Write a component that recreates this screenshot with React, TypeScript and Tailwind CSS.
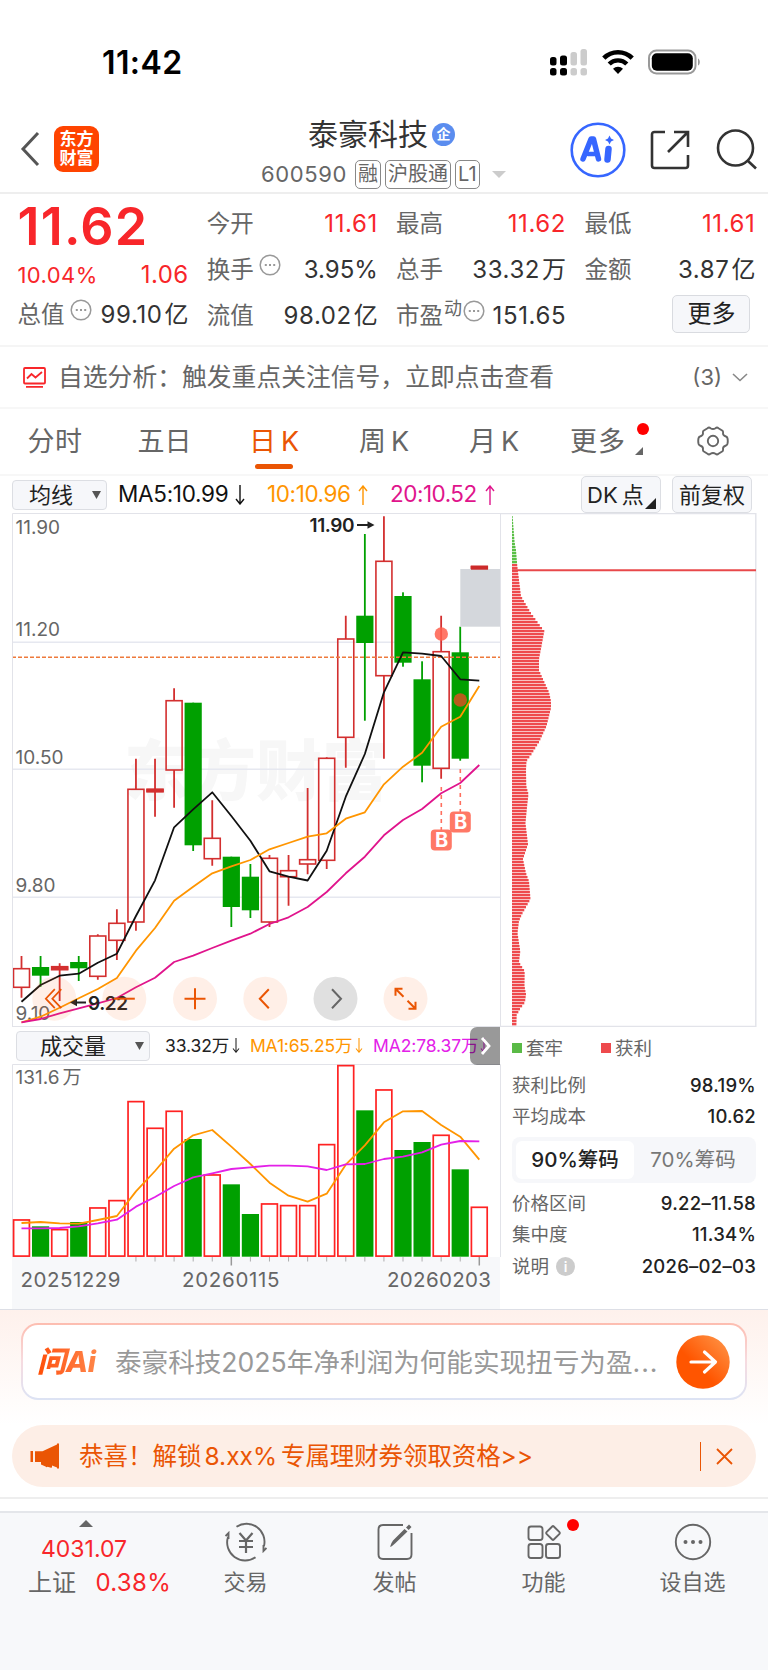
import type { ReactNode } from 'react'

type Candle = [top: number, bottom: number, high: number, low: number, up: 0 | 1]

// body top, body bottom, high, low, rising
const candles: Candle[] = [
  [968.7, 987.3, 956, 997.7, 1],
  [967, 975.7, 956, 986.7, 0],
  [966.7, 969.7, 963.3, 1001, 1],
  [962, 968.3, 956, 981, 0],
  [936, 976.3, 934.3, 979.7, 1],
  [923.3, 940.3, 909.3, 960, 1],
  [789.3, 922, 758.7, 930.7, 1],
  [789.3, 791.7, 758.7, 816.7, 1],
  [700.7, 770, 688.3, 807.7, 1],
  [702.7, 845.3, 702.7, 851, 0],
  [838.3, 858.7, 800.3, 865.7, 1],
  [856.7, 907, 856.7, 927, 0],
  [876.7, 910.3, 864, 918, 0],
  [858.3, 922, 855, 927, 1],
  [870.7, 876.7, 855, 905.7, 1],
  [859.7, 864, 788, 874.3, 1],
  [758.3, 860.3, 757.3, 869, 1],
  [639, 737.3, 615.7, 767.7, 1],
  [615.7, 643, 534, 720.7, 0],
  [561.3, 675.7, 516.3, 758.7, 1],
  [596, 662.7, 592.3, 666.7, 0],
  [679.3, 765.7, 661.3, 782.3, 0],
  [651.7, 768.3, 615.7, 778.7, 1],
  [652.3, 758.7, 626.7, 760.7, 0],
  [566.5, 569, 566.5, 569, 1],
]

const ma5 = [1001.7, 985, 975.7, 973.7, 962.7, 953.7, 916, 880.3, 827.3, 809.3, 792.3, 816, 840.7, 871.3, 876.7, 880.5, 850.7, 796.7, 754, 692.3, 652.3, 653.7, 656, 679.3, 680.7]
const ma10 = [1022.3, 1016.7, 1007.7, 998.3, 989, 978, 950.7, 928, 900.7, 886.7, 873.3, 866.3, 860, 849.3, 843, 836.7, 833.3, 818.7, 812.3, 784.3, 766.7, 752.7, 726.7, 716.7, 686]
const ma20 = [1022.3, 1019, 1013.3, 1008.3, 1003.3, 998, 987.3, 977.7, 962, 955.7, 948, 940.7, 933.7, 924, 917.3, 907, 892, 873.3, 856.7, 835.3, 820, 809, 793.3, 783, 765]

const volumes = [599, 619, 628, 606, 563, 541, 244, 324, 273, 357, 464, 493, 582, 551, 556, 556, 373, 136, 271, 209, 390, 366, 345, 448, 561]
const volMa1 = [609, 606, 610, 611, 600, 588, 514, 453, 386, 346, 330, 380, 432, 488, 527, 545, 521, 434, 376, 307, 274, 273, 315, 350, 419]
const volMa2 = [625, 625, 624, 619, 610, 599, 560, 531, 498, 472, 460, 447, 442, 437, 437, 439, 450, 433, 432, 417, 410, 397, 374, 363, 364]

// chip distribution outline: y, width
const chips: [number, number][] = [
  [516, 0.7], [541, 2.6], [549, 4], [565, 5.3], [595, 9], [612, 19], [623, 27], [630, 32.3], [645, 29.5], [658, 27],
  [669, 27], [678, 31], [691, 37], [700, 39], [707, 39], [725, 34.5], [741, 27], [753, 19.5], [760, 14.5], [769, 14],
  [785, 14.3], [793, 16.5], [806, 15], [822, 13.5], [843, 16], [858, 11], [872, 14], [880, 17], [898, 18.5], [906, 14],
  [913, 10], [920, 7], [932, 5.5], [950, 8.3], [961, 7], [970, 12.7], [985, 12.5], [993, 14], [1001, 13], [1008, 8],
  [1014, 4.7], [1027, 4.3],
]

const cx = (i: number) => 21.5 + i * 19.075
const line = (ys: number[]) => ys.map((y, i) => `${cx(i)},${y}`).join(' ')
const volLine = (ys: number[]) => line(ys.map((y) => 1020 + y / 3))

function chipWidth(y: number) {
  for (let i = 1; i < chips.length; i++) {
    const [y0, w0] = chips[i - 1]
    const [y1, w1] = chips[i]
    if (y <= y1) return w0 + ((w1 - w0) * (y - y0)) / (y1 - y0)
  }
  return 4
}

function Arrow({ up, className }: { up?: boolean; className?: string }) {
  return (
    <svg viewBox="0 0 10 20" className={className} fill="none" stroke="currentColor" strokeWidth="1.4">
      {up ? <path d="M5 20V1M1 6l4-5 4 5" /> : <path d="M5 0v19M1 14l4 5 4-5" />}
    </svg>
  )
}

function Dots({ className }: { className?: string }) {
  return (
    <svg viewBox="0 0 22 22" className={className} fill="none" stroke="#999" strokeWidth="1.5">
      <circle cx="11" cy="11" r="9.8" />
      <path d="M5.8 11h2M10 11h2M14.2 11h2" strokeWidth="2" />
    </svg>
  )
}

function StatusBar() {
  return (
    <div className="flex h-[112px] items-start justify-between pl-[102px] pr-[67px] pt-[46px]">
      <span className="text-[32px] font-semibold leading-[33px] tracking-[0.4px] text-black">11:42</span>
      <div className="flex pt-[3px]">
        <svg className="mr-[15px] h-[28px] w-[37px]" viewBox="0 0 37 28">
          <g fill="#000">
            <rect x="0" y="8" width="6.5" height="8.5" rx="2.5" />
            <rect x="10" y="6.5" width="7" height="10" rx="2.5" />
            <rect x="0" y="19" width="6.5" height="7.5" rx="2.5" />
            <rect x="10" y="19" width="7" height="7.5" rx="2.5" />
          </g>
          <g fill="#ccc">
            <rect x="20.5" y="3" width="6.5" height="13.5" rx="2.5" />
            <rect x="30.5" y="0" width="6.5" height="16.5" rx="2.5" />
            <rect x="20.5" y="19" width="6.5" height="7.5" rx="2.5" />
            <rect x="30.5" y="19" width="6.5" height="7.5" rx="2.5" />
          </g>
        </svg>
        <svg className="mr-[14px] h-[26px] w-[32px]" viewBox="0 0 32 26" fill="none" stroke="#000" strokeWidth="4.6">
          <path d="M1.8 9.2a20 20 0 0 1 28.4 0" />
          <path d="M7.2 15a12.4 12.4 0 0 1 17.6 0" strokeWidth="4.4" />
          <path d="M16 25l-5-5.2a7 7 0 0 1 10 0z" fill="#000" stroke="none" />
        </svg>
        <svg className="h-[26px] w-[53px]" viewBox="0 0 53 26">
          <rect x="1" y="1.5" width="46.5" height="23" rx="7.5" fill="none" stroke="#999" strokeWidth="2" />
          <rect x="3.8" y="4.3" width="41" height="17.5" rx="5" fill="#000" />
          <path d="M50 9.5c2.4 1 2.4 6 0 7z" fill="#999" />
        </svg>
      </div>
    </div>
  )
}

function Tag({ children }: { children: ReactNode }) {
  return (
    <span className="flex h-[29px] items-center rounded-[5px] border-[1.5px] border-[#888] px-[2px] text-[20px] leading-none text-[#666]">{children}</span>
  )
}

function Header() {
  return (
    <header className="flex h-[82px] items-start border-b-2 border-[#eeeeee] pl-5 pr-[10px]">
      <div className="flex w-[241px] items-center gap-[14px] pt-[14px]">
        <svg className="h-[36px] w-[20px]" viewBox="0 0 20 36" fill="none" stroke="#555" strokeWidth="3">
          <path d="M18 2L3 18l15 16" />
        </svg>
        <div className="flex h-[46px] w-[45px] flex-col items-center justify-center rounded-[9px] bg-[#ff4400] text-[17px] font-bold leading-[19px] text-white">
          <span>东方</span>
          <span>财富</span>
        </div>
      </div>
      <div className="flex flex-col">
        <div className="flex h-[44px] items-center gap-[4px] pl-[47px]">
          <span className="text-[30px] leading-none text-[#333]">泰豪科技</span>
          <span className="flex h-[23px] w-[23px] items-center justify-center rounded-full bg-[#5b8def] text-[14px] font-bold leading-none text-white">企</span>
        </div>
        <div className="flex h-[34px] items-center gap-[4px] pt-[2px]">
          <span className="mr-[4px] w-[86px] text-[22px] leading-none tracking-[0.6px] text-[#666]">600590</span>
          <Tag>融</Tag>
          <Tag>沪股通</Tag>
          <Tag>L1</Tag>
          <svg className="ml-[8px] h-[7px] w-[14px]" viewBox="0 0 14 7">
            <path d="M0 0h14L7 7z" fill="#ccc" />
          </svg>
        </div>
      </div>
      <div className="ml-auto flex items-center gap-[26px] pt-[10px]">
        <svg className="-mr-[2px] h-[56px] w-[56px]" viewBox="0 0 56 56">
          <circle cx="28" cy="28" r="26.3" fill="none" stroke="#3666ff" strokeWidth="2.6" />
          <g fill="none" stroke="#3666ff" strokeLinejoin="round" strokeLinecap="round">
            <path d="M13 37l8-20h2.5l5 20" strokeWidth="5.4" />
            <path d="M18 32h8" strokeWidth="4.5" />
            <path d="M38.5 27l-1 10.5" strokeWidth="6.5" />
          </g>
          <path d="M39.5 13.5l1.500 3 3 1.500-3 1.500-1.500 3-1.500-3-3-1.500 3-1.500z" fill="#3666ff" />
        </svg>
        <svg className="h-[40px] w-[40px]" viewBox="0 0 40 40" fill="none" stroke="#333" strokeWidth="2.6">
          <path d="M15 2H4.500Q2 2 2 4.500v31Q2 38 4.500 38h31q2.500 0 2.500-2.500V25M24 2h14v15M38 2L18 22" />
        </svg>
        <svg className="h-[42px] w-[42px]" viewBox="0 0 42 42" fill="none" stroke="#333" strokeWidth="2.6">
          <circle cx="19.5" cy="19" r="17.5" />
          <path d="M31.5 31.5l8.500 8" />
        </svg>
      </div>
    </header>
  )
}

function Cell({ label, extra, value, unit, red }: { label: string; extra?: ReactNode; value: string; unit?: string; red?: boolean }) {
  return (
    <div className="flex h-[46px] items-center justify-between leading-none">
      <span className="flex items-center text-[23.5px] text-[#666]">
        {label}
        {extra}
      </span>
      <span className={red ? 'text-[24px] text-[#f8262a]' : 'text-[24px] text-[#333]'}>
        <span className={value.endsWith('%') ? 'tracking-normal' : 'tracking-[0.6px]'}>{value}</span>
        {unit && <span className="ml-[2px]">{unit}</span>}
      </span>
    </div>
  )
}

function Quote() {
  const dots = <Dots className="mb-[10px] ml-[5px] h-[22px] w-[22px]" />
  return (
    <section className="grid h-[153px] grid-cols-[171px_171px_170px_171px] gap-x-[18.3px] border-b-2 border-[#f5f5f5] pl-[17.5px] pt-[7px]">
      <div>
        <div className="h-[57px] text-[52px] font-semibold leading-[51px] tracking-[1.2px] text-[#f8262a]">11.62</div>
        <div className="flex h-[34px] items-center justify-between text-[#f8262a]">
          <span className="text-[22px] tracking-[0.4px]">10.04%</span>
          <span className="text-[24px] tracking-[0.4px]">1.06</span>
        </div>
        <Cell label="总值" extra={dots} value="99.10" unit="亿" />
      </div>
      <div>
        <Cell label="今开" value="11.61" red />
        <Cell label="换手" extra={dots} value="3.95%" />
        <Cell label="流值" value="98.02" unit="亿" />
      </div>
      <div>
        <Cell label="最高" value="11.62" red />
        <Cell label="总手" value="33.32" unit="万" />
        <Cell
          label="市盈"
          extra={
            <>
              <span className="mb-[15px] ml-[1px] text-[18px]">动</span>
              <Dots className="mb-[10px] ml-[1px] h-[22px] w-[22px]" />
            </>
          }
          value="151.65"
        />
      </div>
      <div>
        <Cell label="最低" value="11.61" red />
        <Cell label="金额" value="3.87" unit="亿" />
        <div className="flex justify-end pr-[5px] pt-[2px]">
          <button className="flex h-[38px] w-[78px] items-center justify-center rounded-[5px] border border-[#d9dbe0] bg-[#f6f7fa] text-[24px] leading-none text-[#222]">更多</button>
        </div>
      </div>
    </section>
  )
}

function Analysis() {
  return (
    <section className="flex h-[62px] items-center border-b-2 border-[#f7f7f7] pl-[23px] pr-[20px] text-[24.8px] leading-none text-[#666]">
      <svg className="mr-[12px] h-[21px] w-[23px]" viewBox="0 0 23 21" fill="none" stroke="#f8262a" strokeWidth="1.8">
        <rect x="1" y="1" width="21" height="15.5" rx="1" />
        <path d="M4 11.5L8.500 7l4 3.500L19 5M3 19.800h17" />
      </svg>
      <span className="flex-1">自选分析：触发重点关注信号，立即点击查看</span>
      <span className="text-[22px]">(3)</span>
      <svg className="ml-[10px] h-[9px] w-[16px]" viewBox="0 0 16 9" fill="none" stroke="#888" strokeWidth="1.6">
        <path d="M1 1l7 6.500L15 1" />
      </svg>
    </section>
  )
}

function Tabs() {
  return (
    <nav className="flex h-[67px] items-start border-b-2 border-[#f7f7f7] pt-[18px] text-[27px] leading-[30px] text-[#666]">
      <span className="w-[110px] text-center tracking-[0.6px]">分时</span>
      <span className="w-[109px] text-center">五日</span>
      <span className="flex w-[110px] flex-col items-center text-[#ea5504]">
        <span className="flex gap-[5px]"><span>日</span><span>K</span></span>
        <span className="mt-[7px] h-[5px] w-[38px] rounded-full bg-[#ea5504]" />
      </span>
      <span className="flex w-[110px] justify-center gap-[5px]"><span>周</span><span>K</span></span>
      <span className="flex w-[110px] justify-center gap-[5px]"><span>月</span><span>K</span></span>
      <span className="relative ml-[21px] w-[72px] tracking-[1px]">
        更多
        <i className="absolute -top-[4px] right-[-7px] h-3 w-3 rounded-full bg-[#ff0000]" />
        <svg className="absolute bottom-[2px] right-[-1px] h-2 w-2" viewBox="0 0 8 8">
          <path d="M8 0v8H0z" fill="#666" />
        </svg>
      </span>
      <svg className="-mt-[1px] ml-[55px] h-[30px] w-[32px]" viewBox="0 0 32 30" fill="none" stroke="#666" strokeWidth="1.9" strokeLinejoin="round">
        <path d="M10.500 2.200Q12 1 13.500 2.200Q16 3.800 18.500 2.200Q20 1 21.500 2.200L25.500 4.800Q26.300 5.500 26 7.500Q26 9.500 29 10.500Q30.800 11 30.800 15Q30.800 19 29 19.500Q26 20.500 26 22.500Q26.300 24.500 25.500 25.200L21.500 27.800Q20 29 18.500 27.800Q16 26.200 13.500 27.800Q12 29 10.500 27.800L6.500 25.200Q5.700 24.500 6 22.500Q6 20.500 3 19.500Q1.200 19 1.200 15Q1.200 11 3 10.500Q6 9.500 6 7.500Q5.700 5.500 6.500 4.800z" />
        <circle cx="16" cy="15" r="5.2" />
      </svg>
    </nav>
  )
}

function MaRow() {
  return (
    <div className="flex h-[37px] items-center pl-[12px] text-[22.5px] leading-none">
      <div className="flex h-[30px] w-[95px] items-center justify-between rounded-[4px] border border-[#dcdee3] bg-[#f6f7fa] pl-[16px] pr-[5px] text-[22px] text-[#222]">
        均线
        <svg className="h-[8px] w-[9px]" viewBox="0 0 9 8"><path d="M0 0h9L4.500 8z" fill="#555" /></svg>
      </div>
      <span className="ml-[11px] w-[111px] whitespace-nowrap tracking-[-0.3px] text-[#111]">MA5:10.99</span>
      <Arrow className="ml-[6px] h-[20px] w-[10px] text-[#111]" />
      <span className="ml-[22px] w-[86px] whitespace-nowrap tracking-[-0.4px] text-[#ff9500]">10:10.96</span>
      <Arrow up className="ml-[5px] h-[20px] w-[10px] text-[#ff9500]" />
      <span className="ml-[22px] w-[88px] whitespace-nowrap tracking-[-0.5px] text-[#e0148c]">20:10.52</span>
      <Arrow up className="ml-[7px] h-[20px] w-[10px] text-[#e0148c]" />
      <button className="relative ml-[86px] h-[37px] w-[80px] rounded-[5px] border border-[#dcdee3] bg-[#f6f7fa] pl-[5px] text-left text-[22px] text-[#222]">
        DK<span className="ml-[4px]">点</span>
        <svg className="absolute bottom-[3px] right-[4px] h-[11px] w-[11px]" viewBox="0 0 11 11"><path d="M11 0v11H0z" fill="#222" /></svg>
      </button>
      <button className="ml-[11px] h-[37px] w-[80px] rounded-[5px] border border-[#dcdee3] bg-[#f6f7fa] text-[22px] text-[#222]">前复权</button>
    </div>
  )
}

function RoundButton({ x, gray, children }: { x: number; gray?: boolean; children: ReactNode }) {
  return (
    <g transform={`translate(${x} 998.7)`} fill="none" stroke={gray ? '#666' : '#ea5504'} strokeWidth="2">
      <circle r="22" fill={gray ? '#000' : '#fb6a20'} fillOpacity={gray ? 0.12 : 0.11} stroke="none" />
      {children}
    </g>
  )
}

function KLine() {
  return (
    <svg className="h-[514px] w-[489px]" viewBox="12 513 489 514" fontFamily="Inter">
      <g fontFamily='"Noto Sans CJK SC"' fontWeight="900" fontSize="66" fill="#f7f7f7">
        <text x="124" y="795">东方财富</text>
      </g>
      <path d="M12 642.300H500M12 769.300H500M12 897.300H500" stroke="#e6e8f0" strokeWidth="1.5" />
      <g fontSize="19" fill="#666">
        <text x="15.5" y="534">11.90</text>
        <text x="15.5" y="636">11.20</text>
        <text x="15.5" y="764">10.50</text>
        <text x="15.5" y="892">9.80</text>
        <text x="15.5" y="1020">9.10</text>
      </g>
      {candles.map(([top, bottom, high, low, up], i) =>
        up ? (
          <g key={i} fill="none" stroke="#d32f2f" strokeWidth="1.6">
            <path d={`M${cx(i)} ${high}V${top}M${cx(i)} ${bottom}V${low}`} strokeWidth="1.8" />
            <rect x={cx(i) - 8} y={top} width="16" height={bottom - top} />
          </g>
        ) : (
          <g key={i} fill="#00a000">
            <rect x={cx(i) - 0.9} y={high} width="1.8" height={low - high} />
            <rect x={cx(i) - 8.6} y={top} width="17.2" height={bottom - top} />
          </g>
        ),
      )}
      {/* short bodies are drawn solid */}
      <path d="M13 968.2h17M13 968.2" stroke="none" />
      <path d={`M${cx(2) - 8.6} 968.2h17.2M${cx(7) - 8.6} 790.5h17.2`} stroke="#d32f2f" strokeWidth="3.6" />
      <rect x="460.3" y="569" width="40" height="57.7" fill="#d4d7dc" />
      <rect x="471" y="565.7" width="17" height="4" fill="#cc2a2a" />
      <path d="M12 657.300H500" stroke="#ee7a3c" strokeWidth="1.6" strokeDasharray="4 2" />
      <circle cx="441.3" cy="634" r="6.7" fill="#ff5f4c" fillOpacity="0.85" />
      <circle cx="460.3" cy="700" r="6.7" fill="#b85c1c" />
      <g fill="none" strokeWidth="1.8" strokeLinejoin="round">
        <polyline points={line(ma5)} stroke="#111" />
        <polyline points={line(ma10)} stroke="#ff9500" />
        <polyline points={line(ma20)} stroke="#e0148c" />
      </g>
      <path d="M441.300 787v43M460.300 769v43" stroke="#ff6f5e" strokeWidth="1.6" strokeDasharray="4 4" />
      <g fill="#ff7866">
        <rect x="430.8" y="829.5" width="21" height="21" rx="4" />
        <rect x="449.8" y="811.5" width="21" height="21" rx="4" />
      </g>
      <g fontSize="20" fontWeight="700" fill="#fff" textAnchor="middle">
        <text x="441.5" y="847.3">B</text>
        <text x="460.5" y="829.3">B</text>
      </g>
      <g fontSize="19" fontWeight="600" fill="#222">
        <text x="309.5" y="532" textLength="45">11.90</text>
        <text x="88" y="1009.5" textLength="40">9.22</text>
      </g>
      <path d="M357 525h13M86 1002.500H73" stroke="#222" strokeWidth="1.8" />
      <path d="M374.500 525l-7-3.800v7.600zM70 1002.500l7-3.800v7.600z" fill="#222" />
      <RoundButton x={54.3}><path d="M0.500-9.500l-9 9.500 9 9.500M7-9.500l-9 9.500 9 9.500" strokeWidth="1.7" /></RoundButton>
      <RoundButton x={124.3}><path d="M-10.500 0h21" /></RoundButton>
      <RoundButton x={195}><path d="M-10.500 0h21M0-10.500v21" /></RoundButton>
      <RoundButton x={265.3}><path d="M3.500-9.500l-9 9.500 9 9.500" /></RoundButton>
      <RoundButton x={335.5} gray><path d="M-3.500-9.500l9 9.500-9 9.500" /></RoundButton>
      <RoundButton x={405.5}><path d="M-2-2l-8-8M-10-3v-7h7M2 2l8 8M10 3v7H3" /></RoundButton>
      <path d="M12.500 1027V513.500H501M500.500 513V1027M12 1026.500H501" fill="none" stroke="#e2e3e9" />
    </svg>
  )
}

function ChipChart() {
  const rows = Array.from({ length: 170 }, (_, i) => 516 + i * 3)
  return (
    <svg className="h-[514px] w-[256px]" viewBox="501 513 256 514">
      <path d="M501 513.500h254.800V1026.500H501" fill="none" stroke="#e2e3e9" strokeWidth="1.4" />
      {rows.map((y) => (
        <g key={y} fill={y < 564 ? '#5abf46' : '#ee4a4d'}>
          <rect x="512" y={y} width={chipWidth(y)} height="2" />
          <rect x="512" y={y + 2} width={chipWidth(y)} height="1" fillOpacity="0.35" />
        </g>
      ))}
      <path d="M512 570.300h244" stroke="#e8484a" strokeWidth="2" />
    </svg>
  )
}

function Volume() {
  return (
    <div className="w-[489px]">
      <div className="relative flex h-[37px] items-center pl-[4px] text-[17.5px] leading-none">
        <div className="flex h-[30px] w-[134px] items-center justify-between rounded-[4px] border border-[#dcdee3] bg-[#f6f7fa] pl-[23px] pr-[5px] text-[22px] text-[#222]">
          成交量
          <svg className="h-[8px] w-[9px]" viewBox="0 0 9 8"><path d="M0 0h9L4.500 8z" fill="#555" /></svg>
        </div>
        <span className="ml-[15px] w-[61px] whitespace-nowrap tracking-[-0.1px] text-[#222]">33.32万</span>
        <Arrow className="ml-[6px] h-[15px] w-[8px] text-[#222]" />
        <span className="ml-[10px] w-[100px] whitespace-nowrap tracking-[-0.2px] text-[#ff9500]">MA1:65.25万</span>
        <Arrow className="ml-[5px] h-[15px] w-[8px] text-[#ff9500]" />
        <span className="ml-[10px] w-[101px] whitespace-nowrap tracking-[-0.1px] text-[#e320e8]">MA2:78.37万</span>
        <Arrow className="ml-[6px] h-[15px] w-[8px] text-[#e320e8]" />
        <button className="absolute right-[1px] top-0 flex h-[38px] w-[30px] items-center justify-center rounded-l-[7px] bg-black/40">
          <svg className="h-[18px] w-[11px]" viewBox="0 0 11 18" fill="none" stroke="#fff" strokeWidth="2.8"><path d="M2 1l7 8-7 8" /></svg>
        </button>
      </div>
      <svg className="h-[245px] w-[489px]" viewBox="12 1064 489 245" fontFamily='Inter, "Noto Sans CJK SC"'>
        <rect x="12" y="1257" width="488" height="52" fill="#f7f8fa" />
        <path d="M12.500 1257V1064.500H500.500V1257" fill="none" stroke="#e2e3e9" />
        <text x="15.5" y="1083.5" fontSize="19" fill="#666">131.6<tspan dx="3">万</tspan></text>
        {volumes.map((v, i) => {
          const top = 1020 + v / 3
          const red = candles[i][4]
          return (
            <rect
              key={i}
              x={cx(i) - (red ? 7.9 : 8.6)}
              y={red ? top + 0.3 : top}
              width={red ? 15.8 : 17.2}
              height={(red ? 1255.8 : 1256.7) - top}
              fill={red ? '#fff' : '#00a000'}
              stroke={red ? '#f22' : 'none'}
              strokeWidth="1.7"
            />
          )
        })}
        <g fill="none" strokeWidth="1.8" strokeLinejoin="round">
          <polyline points={volLine(volMa1)} stroke="#ff9500" />
          <polyline points={volLine(volMa2)} stroke="#e320e8" />
        </g>
        {volumes.map((_, i) =>
          i > 5 ? <path key={i} d={`M${cx(i)} 1257v${i === 11 || i === 24 ? 8.5 : 4.5}`} stroke="#999" strokeWidth={i === 11 || i === 24 ? 1.5 : 0.8} /> : null,
        )}
        <g fontSize="20.5" fill="#666">
          <text x="20.5" y="1286.5" textLength="100">20251229</text>
          <text x="182" y="1286.5" textLength="97.5">20260115</text>
          <text x="387" y="1286.5" textLength="104">20260203</text>
        </g>
      </svg>
    </div>
  )
}

function Stat({ label, value, info }: { label: string; value: string; info?: boolean }) {
  return (
    <div className="flex h-[31px] items-center justify-between leading-none">
      <span className="flex items-center text-[18.5px] text-[#666]">
        {label}
        {info && <i className="ml-[7px] flex h-[19px] w-[19px] items-center justify-center rounded-full bg-[#ccc] text-[14px] font-semibold not-italic text-white">i</i>}
      </span>
      <span className="text-[18.5px] font-medium tracking-[0.25px] text-[#222]">{value}</span>
    </div>
  )
}

function ChipStats() {
  return (
    <div className="w-[255px] pl-[11px] pt-[9px]">
      <div className="flex h-[24px] items-center text-[18.5px] leading-none text-[#666]">
        <i className="mr-[4px] h-[10px] w-[10px] bg-[#5aba46]" />
        套牢
        <i className="ml-[38px] mr-[4px] h-[10px] w-[10px] bg-[#ee4a4d]" />
        获利
      </div>
      <div className="mt-[10px]">
        <Stat label="获利比例" value="98.19%" />
        <Stat label="平均成本" value="10.62" />
      </div>
      <div className="mb-[5px] mt-[5px] flex h-[46px] items-center rounded-[8px] bg-[#f6f7fa] px-[4px] text-[20.5px] leading-none">
        <span className="flex h-[38px] w-[118px] items-center justify-center rounded-[6px] bg-white font-medium text-[#222]">90%筹码</span>
        <span className="flex-1 text-center text-[#777]">70%筹码</span>
      </div>
      <Stat label="价格区间" value="9.22–11.58" />
      <Stat label="集中度" value="11.34%" />
      <div className="pt-[1px]">
        <Stat label="说明" value="2026–02–03" info />
      </div>
    </div>
  )
}

function AskBox() {
  return (
    <section className="h-[116px] border-t border-[#dddfe6] bg-gradient-to-b from-[#fef1ec] to-white px-[21px] pt-[13px]">
      <div className="rounded-[17px] bg-gradient-to-b from-[#fdbdb0] via-[#f6dbe0] to-[#dce3f4] p-[2px]">
        <div className="flex h-[73px] items-center rounded-[15px] bg-white pl-[14px] pr-[15px]">
          <span className="w-[66px] bg-gradient-to-r from-[#ff4d00] to-[#ff8a4c] bg-clip-text text-[29px] font-extrabold italic leading-[34px] tracking-[-0.3px] text-transparent">问Ai</span>
          <span className="ml-[12px] flex-1 whitespace-nowrap text-[26.6px] leading-[36px] text-[#999]">
            泰豪科技2025年净利润为何能实现扭亏为盈<span className="tracking-[1px]">...</span>
          </span>
          <svg className="h-[54px] w-[54px] shrink-0" viewBox="0 0 54 54">
            <defs>
              <linearGradient id="go" x1="0" y1="1" x2="1" y2="0">
                <stop offset="0.4" stopColor="#ff5500" />
                <stop offset="1" stopColor="#ff9a4d" />
              </linearGradient>
            </defs>
            <circle cx="27" cy="27" r="26.7" fill="url(#go)" />
            <path d="M15 27h24M28.500 17l11 10-11 10" fill="none" stroke="#fff" strokeWidth="3.2" strokeLinecap="round" strokeLinejoin="round" />
          </svg>
        </div>
      </div>
    </section>
  )
}

function Notice() {
  return (
    <section className="h-[74px] border-b-2 border-[#eee] px-[12px]">
      <div className="flex h-[62px] items-center rounded-full bg-[#fdeee6] pl-[18px] pr-[23px] text-[#ea5504]">
        <svg className="h-[26px] w-[30px]" viewBox="0 0 30 26" fill="#ea5504">
          <path d="M0.500 8H3v11H0.500zM5 8.200h7.500L27 1.500V0.500h2v25h-2v-1L22 22.500v1.500q0 1-1 .8l-3.500-1q-.8 1-2-.2L11 21.500V19H5z" />
        </svg>
        <span className="ml-[19px] flex-1 text-[24.5px] leading-none">
          恭喜！解锁<span className="ml-[3px] mr-[4px]">8.xx%</span><span className="tracking-[-0.1px]">专属理财券领取资格&gt;&gt;</span>
        </span>
        <i className="mr-[15px] h-[29px] w-[1.5px] bg-[#ea5504]" />
        <svg className="h-[17px] w-[17px]" viewBox="0 0 17 17" fill="none" stroke="#ea5504" strokeWidth="1.8">
          <path d="M1 1l15 15M16 1L1 16" />
        </svg>
      </div>
    </section>
  )
}

function NavItem({ label, dot, children }: { label: string; dot?: boolean; children: ReactNode }) {
  return (
    <div className="flex w-[149px] flex-col items-center">
      <div className="relative h-[40px] w-[42px]">
        <svg className="h-[40px] w-[42px]" viewBox="-21 -20 42 40" fill="none" stroke="#666" strokeWidth="1.9">
          {children}
        </svg>
        {dot && <i className="absolute right-[-14px] top-[-3px] h-[12px] w-[12px] rounded-full bg-[#ff0000]" />}
      </div>
      <span className="mt-[8px] text-[22px] leading-[24px] text-[#666]">{label}</span>
    </div>
  )
}

function BottomBar() {
  return (
    <footer className="mt-[12px] flex h-[160px] border-t-2 border-[#e4e6ea] bg-[#f7f8fa]">
      <div className="w-[171px] pt-[7px] leading-none">
        <svg className="ml-[79px] h-[7px] w-[14px]" viewBox="0 0 14 7"><path d="M7 0l7 7H0z" fill="#666" /></svg>
        <div className="mt-[9px] pl-[41px] text-[23px] leading-[26px] text-[#f8262a]">4031.07</div>
        <div className="mt-[8px] flex items-center justify-between pl-[28px] leading-[26px]">
          <span className="text-[24px] text-[#666]">上证</span>
          <span className="text-[24px] tracking-[0.3px] text-[#f8262a]">0.38%</span>
        </div>
      </div>
      <div className="flex pt-[9px]">
        <NavItem label="交易">
          <path d="M-9.500-15.200A18 18 0 0 1 18 4M20.500 6l-3 3v-6M9.500 15.200A18 18 0 0 1-18-5M-20.500-6l3-3v6" />
          <path d="M-6.500-9L0-1.500 6.500-9M0-1.500V11M-7-1H7M-7 5H7" strokeWidth="2.2" />
        </NavItem>
        <NavItem label="发帖">
          <path d="M8-17H-12q-4.500 0-4.500 4.500v25q0 4.500 4.500 4.500H12q4.500 0 4.500-4.500V-9" />
          <path d="M-5 5q1-4 3-6.500L9.500-13l3 2.500L0 1.500Q-2.500 4-5 5zM11-14.500l3-3 2.500 2.500-2.800 3z" fill="#666" stroke="none" />
        </NavItem>
        <NavItem label="功能" dot>
          <rect x="-15.5" y="-15.5" width="14" height="13.5" rx="2.5" />
          <rect x="-15.5" y="2" width="14" height="14" rx="2.5" />
          <rect x="2" y="2" width="14" height="14" rx="2.5" />
          <path d="M8.200-15.500q.8-.8 1.600 0l5.700 5.700q.8.800 0 1.600L9.800-2.500q-.8.800-1.600 0L2.500-8.200q-.8-.8 0-1.600z" />
        </NavItem>
        <NavItem label="设自选">
          <circle r="17.2" />
          <g fill="#666" stroke="none">
            <circle cx="-7.5" r="2" />
            <circle r="2" />
            <circle cx="7.5" r="2" />
          </g>
        </NavItem>
      </div>
    </footer>
  )
}

export default function App() {
  return (
    <div className="h-[1670px] w-[768px] overflow-hidden bg-white font-['Inter','Noto_Sans_CJK_SC',sans-serif]">
      <StatusBar />
      <Header />
      <Quote />
      <Analysis />
      <Tabs />
      <MaRow />
      <div className="flex pl-[12px]">
        <KLine />
        <ChipChart />
      </div>
      <div className="flex h-[282px] pl-[12px]">
        <Volume />
        <ChipStats />
      </div>
      <AskBox />
      <Notice />
      <BottomBar />
    </div>
  )
}
